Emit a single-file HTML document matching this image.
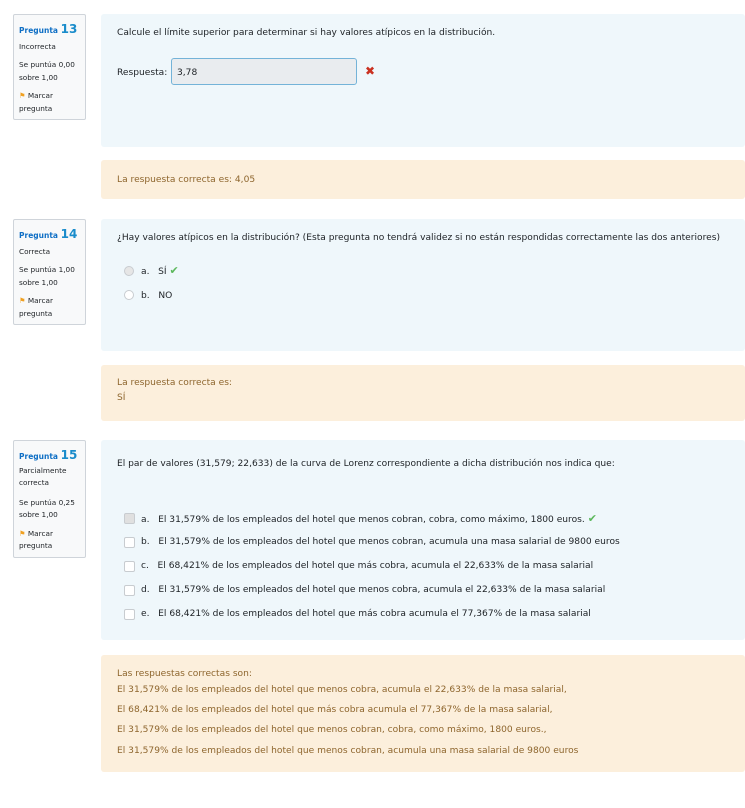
<!DOCTYPE html>
<html><head><meta charset="utf-8"><style>
body{margin:0;width:745px;height:808px;background:#fff;position:relative;font-family:"DejaVu Sans","Liberation Sans",sans-serif;font-size:9.1px;line-height:14px;color:#1d2125;overflow:hidden}
div,span{position:absolute;white-space:nowrap}
.info{left:13px;width:71px;background:#f8f9fa;border:1px solid #cfd4da;border-radius:2px;line-height:normal}
.info span{left:5px;font-size:7.3px}
.q{color:#0f6fc5;font-weight:bold;font-size:7.5px!important}
.q b{font-size:12px;color:#1a8ccb}
.flag{color:#f0a020;font-style:normal}
.c{left:101px;width:644px;background:#eff7fb;border-radius:3px}
.f{left:101px;width:644px;background:#fcefdc;border-radius:3px;color:#8e662e}
.t{left:117px}
.cb{width:9px;height:9px;border:1px solid #c8ccd0;background:#fff;border-radius:2px;left:124px}
.rd{width:8px;height:8px;border:1px solid #c8ccd0;background:#fff;border-radius:50%;left:124px}
.ok{color:#5cb85c;font-weight:bold;font-size:11px}
</style></head><body>

<div class="info" style="top:14px;height:104px">
<span class="q" style="top:7px">Pregunta <b>13</b></span>
<span style="top:27px">Incorrecta</span>
<span style="top:45px">Se puntúa 0,00</span>
<span style="top:58px">sobre 1,00</span>
<span style="top:76px"><i class="flag">⚑</i> Marcar</span>
<span style="top:89px">pregunta</span>
</div>
<div class="c" style="top:14px;height:133px"></div>
<div class="t" style="top:26px">Calcule el límite superior para determinar si hay valores atípicos en la distribución.</div>
<div class="t" style="top:66px">Respuesta:</div>
<div style="left:171px;top:58px;width:184px;height:25px;background:#e9ecef;border:1px solid #74b3d8;border-radius:3px"></div>
<div style="left:177px;top:66px">3,78</div>
<div style="left:365px;top:64px;color:#ca3120;font-weight:bold;font-size:12px">✖</div>
<div class="f" style="top:160px;height:39px"></div>
<div class="t" style="top:173px;color:#8e662e">La respuesta correcta es: 4,05</div>

<div class="info" style="top:219px;height:104px">
<span class="q" style="top:7px">Pregunta <b>14</b></span>
<span style="top:27px">Correcta</span>
<span style="top:45px">Se puntúa 1,00</span>
<span style="top:58px">sobre 1,00</span>
<span style="top:76px"><i class="flag">⚑</i> Marcar</span>
<span style="top:89px">pregunta</span>
</div>
<div class="c" style="top:219px;height:132px"></div>
<div class="t" style="top:231px">¿Hay valores atípicos en la distribución? (Esta pregunta no tendrá validez si no están respondidas correctamente las dos anteriores)</div>
<div class="rd" style="top:266px;background:#e6e6e6"></div>
<div style="left:141px;top:264px">a.&nbsp;&nbsp; SÍ <span class="ok" style="position:static">✔</span></div>
<div class="rd" style="top:290px"></div>
<div style="left:141px;top:289px">b.&nbsp;&nbsp; NO</div>
<div class="f" style="top:365px;height:56px"></div>
<div class="t" style="top:376px;color:#8e662e">La respuesta correcta es:</div>
<div class="t" style="top:391px;color:#8e662e">SÍ</div>

<div class="info" style="top:440px;height:116px">
<span class="q" style="top:7px">Pregunta <b>15</b></span>
<span style="top:25px">Parcialmente</span>
<span style="top:37px">correcta</span>
<span style="top:57px">Se puntúa 0,25</span>
<span style="top:69px">sobre 1,00</span>
<span style="top:88px"><i class="flag">⚑</i> Marcar</span>
<span style="top:100px">pregunta</span>
</div>
<div class="c" style="top:440px;height:200px"></div>
<div class="t" style="top:457px">El par de valores (31,579; 22,633) de la curva de Lorenz correspondiente a dicha distribución nos indica que:</div>
<div class="cb" style="top:513px;background:#e0e0e0"></div>
<div style="left:141px;top:512px">a.&nbsp;&nbsp; El 31,579% de los empleados del hotel que menos cobran, cobra, como máximo, 1800 euros. <span class="ok" style="position:static">✔</span></div>
<div class="cb" style="top:537px"></div>
<div style="left:141px;top:535px">b.&nbsp;&nbsp; El 31,579% de los empleados del hotel que menos cobran, acumula una masa salarial de 9800 euros</div>
<div class="cb" style="top:561px"></div>
<div style="left:141px;top:559px">c.&nbsp;&nbsp; El 68,421% de los empleados del hotel que más cobra, acumula el 22,633% de la masa salarial</div>
<div class="cb" style="top:585px"></div>
<div style="left:141px;top:583px">d.&nbsp;&nbsp; El 31,579% de los empleados del hotel que menos cobra, acumula el 22,633% de la masa salarial</div>
<div class="cb" style="top:609px"></div>
<div style="left:141px;top:607px">e.&nbsp;&nbsp; El 68,421% de los empleados del hotel que más cobra acumula el 77,367% de la masa salarial</div>
<div class="f" style="top:655px;height:117px"></div>
<div class="t" style="top:667px;color:#8e662e">Las respuestas correctas son:</div>
<div class="t" style="top:683px;color:#8e662e">El 31,579% de los empleados del hotel que menos cobra, acumula el 22,633% de la masa salarial,</div>
<div class="t" style="top:703px;color:#8e662e">El 68,421% de los empleados del hotel que más cobra acumula el 77,367% de la masa salarial,</div>
<div class="t" style="top:723px;color:#8e662e">El 31,579% de los empleados del hotel que menos cobran, cobra, como máximo, 1800 euros.,</div>
<div class="t" style="top:744px;color:#8e662e">El 31,579% de los empleados del hotel que menos cobran, acumula una masa salarial de 9800 euros</div>
</body></html>
